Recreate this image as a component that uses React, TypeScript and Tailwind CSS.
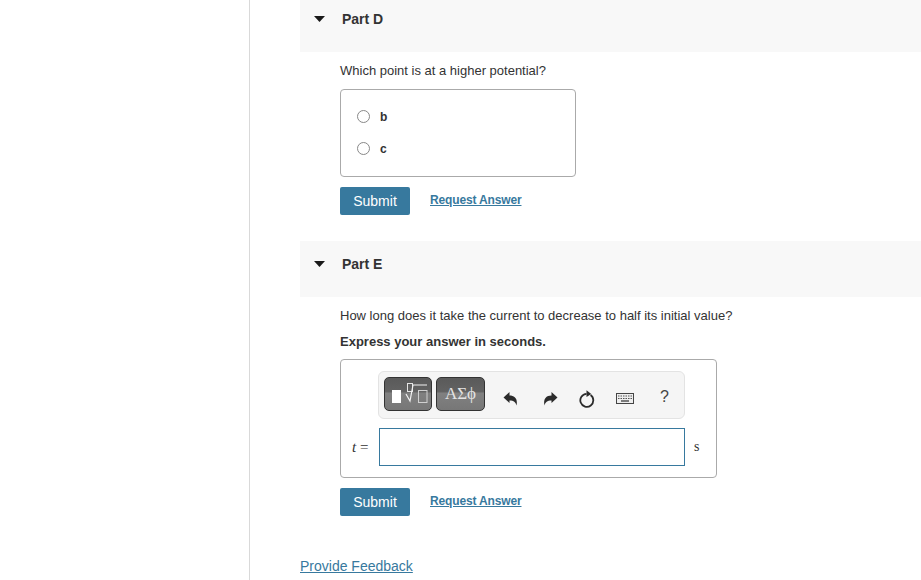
import React from 'react';

const SubmitRow: React.FC = () => (
  <div className="flex items-center gap-5">
    <button className="w-[70px] h-[28px] rounded-[2px] bg-[#37799e] text-white text-[14px] font-medium">Submit</button>
    <a href="#" className="mb-[2px] text-[12px] tracking-[-0.15px] font-bold text-[#37799e] underline">Request Answer</a>
  </div>
);

const PartHeader: React.FC<{ label: string; heightClass: string; pt: string }> = ({ label, heightClass, pt }) => (
  <div className={`flex items-start bg-[#f8f8f8] ${heightClass} ${pt}`}>
    <svg width="11" height="6" viewBox="0 0 11 6" className="ml-[14px] mt-[7px]">
      <path d="M0 0h11L5.500 6z" fill="#1a1a1a" />
    </svg>
    <span className="ml-[17px] text-[14px] leading-[20px] font-bold text-[#333]">{label}</span>
  </div>
);

const Radio: React.FC<{ label: string }> = ({ label }) => (
  <div className="flex items-center h-[32px]">
    <span className="w-[13px] h-[13px] rounded-full border border-[#888] bg-white" />
    <span className="ml-[10px] pt-[2px] text-[12px] font-bold text-[#333]">{label}</span>
  </div>
);

const TemplateIcon = () => (
  <svg width="40" height="26" viewBox="0 0 40 26" fill="none">
    <rect x="4" y="9" width="9" height="13" fill="#fff" />
    <rect x="19.500" y="2.500" width="5" height="8" stroke="#e4e4e4" strokeWidth="1" />
    <path d="M18 13l4 7 3-16h14" stroke="#f2f2f2" strokeWidth="1.200" />
    <rect x="30.500" y="9.500" width="8.500" height="12" stroke="#d0d0d0" strokeWidth="1" />
  </svg>
);

const Undo = () => (
  <svg width="15" height="15" viewBox="0 0 15 15">
    <path d="M0.500 6.500L6.500 1V4.500C11.500 4.500 15 7.500 13.500 14.500C12.500 11 11 9.500 6.500 9.500V12z" fill="#2b2b2b" />
  </svg>
);

const Redo = () => (
  <svg width="15" height="15" viewBox="0 0 15 15">
    <path d="M14.500 6.500L8.500 1V4.500C3.500 4.500 0 7.500 1.500 14.500C2.500 11 4 9.500 8.500 9.500V12z" fill="#2b2b2b" />
  </svg>
);

const Reset = () => (
  <svg width="16" height="18" viewBox="0 0 16 18" fill="none">
    <path d="M11.600 5A6.500 6.500 0 1 1 7.500 3.800" stroke="#2b2b2b" strokeWidth="1.800" />
    <path d="M7.500 0.300L12.300 3.900L7.500 7z" fill="#2b2b2b" />
  </svg>
);

const Keyboard = () => (
  <svg width="18" height="11" viewBox="0 0 18 11" fill="none">
    <rect x="0.500" y="0.500" width="17" height="10" fill="#eee" stroke="#444" />
    <path d="M2 3h14M2 5.500h14" stroke="#555" strokeWidth="1.200" strokeDasharray="1.500 1" />
    <path d="M5 8h8" stroke="#555" strokeWidth="1.500" />
  </svg>
);

const App: React.FC = () => (
  <div className="h-[580px] w-[921px] overflow-hidden bg-white flex font-['Liberation_Sans',Arial,sans-serif] text-[#333]">
    <div className="w-[250px] shrink-0 border-r border-[#d9d9d9]" />
    <div className="flex-1 pl-[50px]">
      <PartHeader label="Part D" heightClass="h-[52px]" pt="pt-[9px]" />
      <div className="pl-[40px]">
        <p className="mt-[11px] text-[13px] leading-[16px]">Which point is at a higher potential?</p>
        <div className="mt-[10px] w-[236px] h-[88px] rounded-[4px] border border-[#aaa] pl-[16px] pt-[10px]">
          <Radio label="b" />
          <Radio label="c" />
        </div>
        <div className="mt-[10px]"><SubmitRow /></div>
      </div>
      <div className="mt-[26px]">
        <PartHeader label="Part E" heightClass="h-[56px]" pt="pt-[13px]" />
      </div>
      <div className="pl-[40px]">
        <p className="mt-[11px] text-[13px] leading-[16px]">How long does it take the current to decrease to half its initial value?</p>
        <p className="mt-[10px] text-[13px] leading-[16px] font-bold">Express your answer in seconds.</p>
        <div className="mt-[9px] w-[377px] h-[119px] rounded-[4px] border border-[#aaa] relative pt-[11px] pl-[37px]">
          <div className="w-[307px] h-[48px] rounded-[6px] border border-[#e3e3e3] bg-[#f5f5f5] flex items-center pl-[5px]">
            <div className="mb-[2px] w-[48px] h-[34px] rounded-[5px] border border-[#333] bg-[linear-gradient(#5a5a5a_0%,#626262_42%,#808080_48%,#777_100%)] flex items-center justify-center">
              <TemplateIcon />
            </div>
            <div className="mb-[2px] ml-[4px] w-[49px] h-[34px] rounded-[5px] border border-[#333] bg-[linear-gradient(#5a5a5a_0%,#626262_42%,#808080_48%,#777_100%)] flex items-center justify-center font-['Liberation_Serif',serif] text-[17px] text-[#e4e4e4]">
              ΑΣϕ
            </div>
            <div className="pt-[6px] ml-[18px] w-[15px] flex justify-center"><Undo /></div>
            <div className="pt-[6px] ml-[25px] w-[15px] flex justify-center"><Redo /></div>
            <div className="pt-[7px] ml-[21px] w-[16px] flex justify-center"><Reset /></div>
            <div className="pt-[7px] ml-[21px] w-[18px] flex justify-center"><Keyboard /></div>
            <span className="pt-[4px] ml-[26px] text-[16px] text-[#444]">?</span>
          </div>
          <div className="flex items-center mt-[9px] pl-[1px]">
            <span className="absolute left-[11px] font-['Liberation_Serif',serif] text-[15px] text-[#333]"><i>t</i> =</span>
            <div className="w-[306px] h-[38px] border border-[#37799e] bg-white" />
            <span className="ml-[9px] mb-[2px] font-['Liberation_Serif',serif] text-[14px]">s</span>
          </div>
        </div>
        <div className="mt-[10px]"><SubmitRow /></div>
      </div>
      <a href="#" className="block mt-[41px] text-[14px] leading-[18px] text-[#37799e] underline">Provide Feedback</a>
    </div>
  </div>
);

export default App;
